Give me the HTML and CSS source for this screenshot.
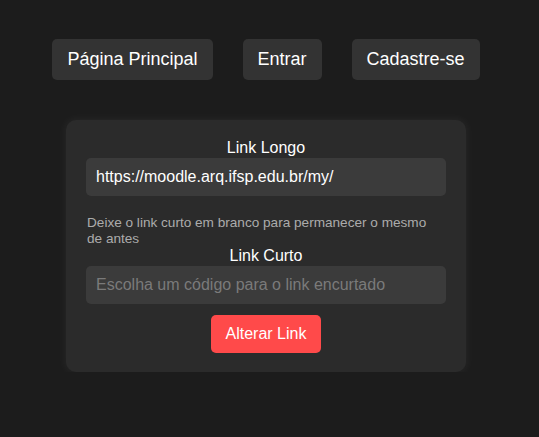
FILE: index.html
```html
<!DOCTYPE html>
<html lang="pt-BR">
<head>
<meta charset="utf-8">
<title>Alterar Link</title>
<link rel="stylesheet" href="styles.css">
</head>
<body>
<div class="page">
  <nav class="nav">
    <a class="nav-btn" href="#">Página Principal</a>
    <a class="nav-btn" href="#">Entrar</a>
    <a class="nav-btn" href="#">Cadastre-se</a>
  </nav>
  <form class="card">
    <label class="label" for="longo">Link Longo</label>
    <input class="field" id="longo" type="text" value="https://moodle.arq.ifsp.edu.br/my/">
    <p class="hint">Deixe o link curto em branco para permanecer o mesmo de antes</p>
    <label class="label" for="curto">Link Curto</label>
    <input class="field" id="curto" type="text" placeholder="Escolha um código para o link encurtado">
    <button class="submit" type="button">Alterar Link</button>
  </form>
</div>
</body>
</html>
```

FILE: styles.css
```css
html, body {
  margin: 0;
  padding: 0;
  background: #1c1c1c;
  font-family: "Liberation Sans", Arial, sans-serif;
  color: #fff;
}
.page {
  width: 532px;
  display: flex;
  flex-direction: column;
  align-items: center;
  padding-top: 39px;
}
.nav {
  display: flex;
  gap: 30px;
  justify-content: center;
}
.nav-btn {
  display: block;
  background: #333333;
  color: #fff;
  text-decoration: none;
  font-size: 18px;
  line-height: 21px;
  padding: 10px 15px;
  border-radius: 5px;
}
.card {
  margin-top: 40px;
  width: 360px;
  padding: 19px 20px 19px 20px;
  background: #2b2b2b;
  border-radius: 10px;
  box-shadow: 0 0 10px 1px rgba(255, 255, 255, 0.05);
  display: flex;
  flex-direction: column;
  align-items: center;
}
.label {
  font-size: 16px;
  line-height: 18px;
  margin-bottom: 1px;
  color: #fff;
}
.field {
  box-sizing: border-box;
  width: 100%;
  height: 38px;
  margin: 0;
  padding: 0 10px;
  border: none;
  outline: none;
  border-radius: 5px;
  background: #3b3b3b;
  color: #fff;
  font-family: "Liberation Sans", Arial, sans-serif;
  font-size: 16px;
}
.field::placeholder {
  color: #7a7a7a;
}
.hint {
  align-self: stretch;
  margin: 19px 10px 0 1px;
  font-size: 13.6px;
  line-height: 16px;
  color: #ababab;
}
.submit {
  margin-top: 11px;
  height: 38px;
  padding: 0 15px;
  border: none;
  border-radius: 5px;
  background: #ff4a4a;
  color: #fff;
  font-family: "Liberation Sans", Arial, sans-serif;
  font-size: 16px;
}
```
